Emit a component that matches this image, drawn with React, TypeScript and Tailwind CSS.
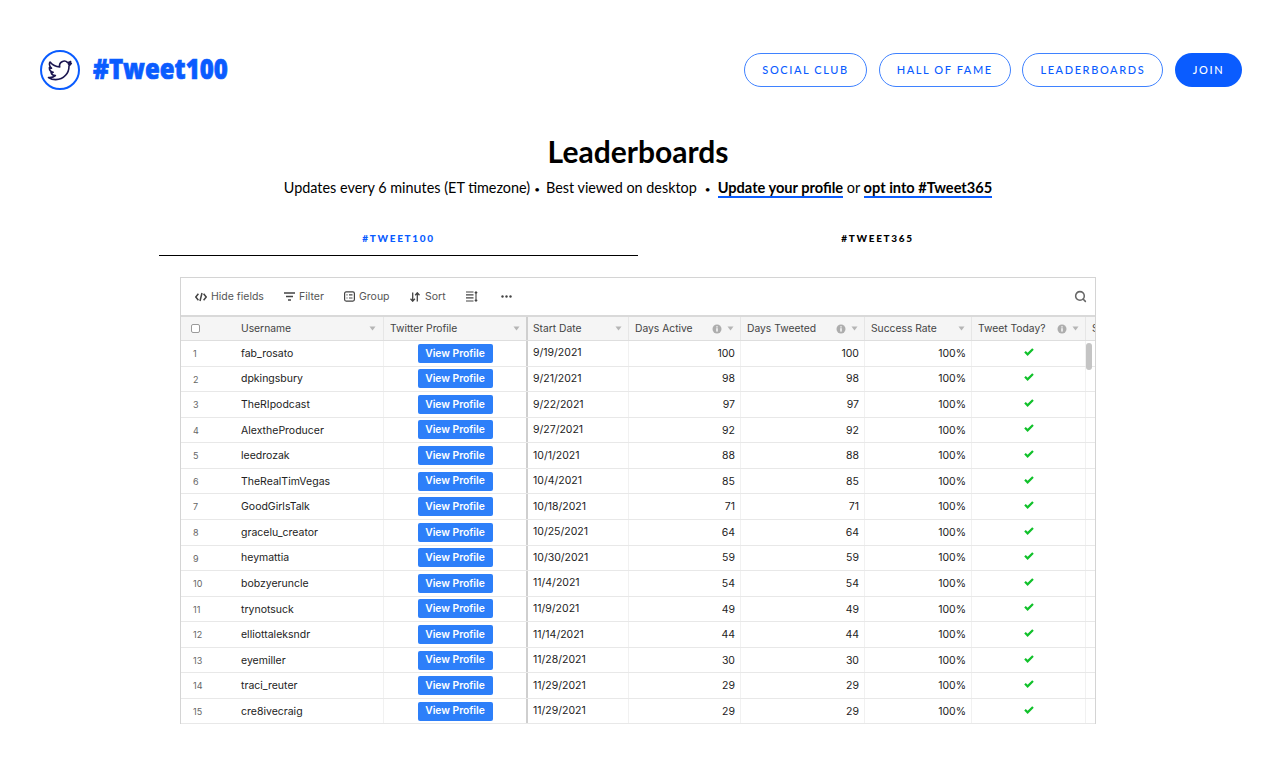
import { Search } from "lucide-react";

const BLUE = "#0a5cff";

const navLinks = [
  { title: "SOCIAL CLUB", width: "w-[123px]" },
  { title: "HALL OF FAME", width: "w-[132px]" },
  { title: "LEADERBOARDS", width: "w-[141px]" },
];

const rows = [
  { name: "fab_rosato", start: "9/19/2021", active: 100 },
  { name: "dpkingsbury", start: "9/21/2021", active: 98 },
  { name: "TheRIpodcast", start: "9/22/2021", active: 97 },
  { name: "AlextheProducer", start: "9/27/2021", active: 92 },
  { name: "leedrozak", start: "10/1/2021", active: 88 },
  { name: "TheRealTimVegas", start: "10/4/2021", active: 85 },
  { name: "GoodGirlsTalk", start: "10/18/2021", active: 71 },
  { name: "gracelu_creator", start: "10/25/2021", active: 64 },
  { name: "heymattia", start: "10/30/2021", active: 59 },
  { name: "bobzyeruncle", start: "11/4/2021", active: 54 },
  { name: "trynotsuck", start: "11/9/2021", active: 49 },
  { name: "elliottaleksndr", start: "11/14/2021", active: 44 },
  { name: "eyemiller", start: "11/28/2021", active: 30 },
  { name: "traci_reuter", start: "11/29/2021", active: 29 },
  { name: "cre8ivecraig", start: "11/29/2021", active: 29 },
];

function Caret() {
  return (
    <svg width="7" height="5" viewBox="0 0 7 5" className="shrink-0">
      <path d="M0.5 0.5h6L3.5 4.5z" fill="#b5b5b5" />
    </svg>
  );
}

function Info() {
  return (
    <svg width="10" height="10" viewBox="0 0 10 10" className="shrink-0">
      <circle cx="5" cy="5" r="4.5" fill="#adadad" />
      <rect x="4.3" y="4.2" width="1.4" height="3.4" fill="#fff" />
      <rect x="4.3" y="2.3" width="1.4" height="1.2" fill="#fff" />
    </svg>
  );
}

function Check() {
  return (
    <svg width="10" height="8" viewBox="0 0 10 8" className="mb-[3px]">
      <path d="M1 3.8l2.6 2.6L9 1" fill="none" stroke="#11c12b" strokeWidth="2.2" />
    </svg>
  );
}

function HeaderCell({ title, width, info, pad = "pl-[6px]", border = "border-r border-[#e6e6e6]" }: { title: string; width: string; info?: boolean; pad?: string; border?: string }) {
  return (
    <div className={`${width} ${border} ${pad} h-full shrink-0 flex items-center pr-[6px]`}>
      <span className="flex-1 truncate">{title}</span>
      {info && <span className="mr-[5px]"><Info /></span>}
      <Caret />
    </div>
  );
}

function Toolbar() {
  return (
    <div className="h-[37px] flex items-center pl-[14px] pr-[8px] text-[10.5px] text-[#555]">
      <div className="flex items-center gap-[4px] w-[89px]">
        <svg width="12" height="10" viewBox="0 0 12 10" fill="none" stroke="#444" strokeWidth="1.5">
          <path d="M3.4 1.8L0.8 5l2.6 3.2M8.6 1.8L11.2 5 8.6 8.2M7 1L5 9" />
        </svg>
        <span>Hide fields</span>
      </div>
      <div className="flex items-center gap-[4px] w-[60px]">
        <svg width="11" height="9" viewBox="0 0 11 9" fill="none" stroke="#444" strokeWidth="1.3">
          <path d="M0 1h11M2 4.5h7M4 8h3" />
        </svg>
        <span>Filter</span>
      </div>
      <div className="flex items-center gap-[4px] w-[66px]">
        <svg width="11" height="11" viewBox="0 0 11 11" fill="none" stroke="#444" strokeWidth="1.2">
          <rect x="0.6" y="0.9" width="9.8" height="9.2" rx="1.5" />
          <path d="M2.5 3.8h1M5 3.8h3.5M2.5 7h1M5 7h3.5" />
        </svg>
        <span>Group</span>
      </div>
      <div className="flex items-center gap-[5px] w-[56px]">
        <svg width="10" height="10" viewBox="0 0 10 10" fill="none" stroke="#444" strokeWidth="1.3">
          <path d="M2.7 0.5v8.5M0.5 6.8l2.2 2.4 2.2-2.4M7.3 9.5V1M5.2 3.2L7.3 0.8l2.2 2.4" />
        </svg>
        <span>Sort</span>
      </div>
      <div className="w-[35px]">
        <svg width="12" height="11" viewBox="0 0 12 11" fill="none" stroke="#444" strokeWidth="1.1">
          <path d="M0 1h7.5M0 3.9h7.5M0 6.9h7.5M0 10h7.5M10 1v9M8.8 2.2L10 .8l1.2 1.4M8.8 8.8l1.2 1.4 1.2-1.4" />
        </svg>
      </div>
      <svg width="11" height="3" viewBox="0 0 11 3" fill="#444">
        <circle cx="1.5" cy="1.5" r="1.2" />
        <circle cx="5.5" cy="1.5" r="1.2" />
        <circle cx="9.5" cy="1.5" r="1.2" />
      </svg>
      <Search className="ml-auto w-[13px] h-[13px] text-[#666]" strokeWidth={2.8} />
    </div>
  );
}

function Table() {
  return (
    <div className="relative w-[916px] h-[447px] ml-[180px] border-x border-t border-[#d4d4d4] overflow-hidden font-['Inter',sans-serif] text-[#333]">
      <Toolbar />
      <div className="h-[26px] flex items-center bg-[#f5f5f5] border-t-2 border-b border-t-[#d9d9d9] border-b-[#dedede] text-[10.3px] text-[#444]">
        <div className="w-[203px] h-full shrink-0 flex items-center border-r border-[#e6e6e6]">
          <span className="w-[60px] pl-[10px] shrink-0">
            <span className="block w-[9px] h-[9px] rounded-[2px] border border-[#9a9a9a] bg-white" />
          </span>
          <span className="flex-1">Username</span>
          <span className="mr-[7px]"><Caret /></span>
        </div>
        <HeaderCell title="Twitter Profile" width="w-[144px]" border="border-r-2 border-[#cfcfcf]" />
        <HeaderCell title="Start Date" width="w-[101px]" pad="pl-[5px]" />
        <HeaderCell title="Days Active" width="w-[112px]" info />
        <HeaderCell title="Days Tweeted" width="w-[124px]" info />
        <HeaderCell title="Success Rate" width="w-[107px]" />
        <HeaderCell title="Tweet Today?" width="w-[114px]" info />
        <div className="pl-[6px]">S</div>
      </div>
      {rows.map((row, i) => (
        <div key={row.name} className="h-[25.57px] flex items-center border-b border-[#e8e8e8] text-[10.5px] text-[#222]">
          <div className="w-[203px] h-full shrink-0 flex items-center border-r border-[#f1f1f1] pt-[1px]">
            <span className="w-[60px] pl-[12px] shrink-0 text-[9px] text-[#666]">{i + 1}</span>
            <span>{row.name}</span>
          </div>
          <div className="w-[144px] h-full shrink-0 flex items-center justify-center border-r-2 border-[#cfcfcf]">
            <span className="w-[75px] h-[19px] rounded-[2px] bg-[#2d7ff9] text-white font-semibold text-[10.3px] flex items-center justify-center">View Profile</span>
          </div>
          <div className="w-[101px] h-full shrink-0 flex items-center pl-[5px] border-r border-[#f1f1f1]">{row.start}</div>
          <div className="w-[112px] h-full shrink-0 flex items-center justify-end pr-[5px] pt-[1px] border-r border-[#f1f1f1]">{row.active}</div>
          <div className="w-[124px] h-full shrink-0 flex items-center justify-end pr-[5px] pt-[1px] border-r border-[#f1f1f1]">{row.active}</div>
          <div className="w-[107px] h-full shrink-0 flex items-center justify-end pr-[5px] pt-[1px] border-r border-[#f1f1f1]">100%</div>
          <div className="w-[114px] h-full shrink-0 flex items-center justify-center border-r border-[#f1f1f1]"><Check /></div>
        </div>
      ))}
      {/* scrollbar thumb */}
      <div className="absolute left-[905px] top-[65px] w-[6px] h-[27px] rounded-[3px] bg-[#c4c4c4]" />
    </div>
  );
}

export default function App() {
  return (
    <div className="w-[1270px] h-[760px] bg-white overflow-hidden font-['Lato',sans-serif] text-black">
      {/* Top nav */}
      <header className="h-[137px] flex items-start pl-[40px] pr-[28px] pt-[50px]">
        <div className="flex items-center gap-[13px]">
          <svg width="40" height="40" viewBox="0 0 40 40">
            <circle cx="20" cy="20" r="19" fill="none" stroke={BLUE} strokeWidth="2" />
            <g transform="translate(8.5 9) scale(0.95)">
              <path
                d="M23.953 4.57a10 10 0 01-2.825.775 4.958 4.958 0 002.163-2.723c-.951.555-2.005.959-3.127 1.184a4.92 4.92 0 00-8.384 4.482C7.69 8.095 4.067 6.13 1.64 3.162a4.822 4.822 0 00-.666 2.475c0 1.71.87 3.213 2.188 4.096a4.904 4.904 0 01-2.228-.616v.06a4.923 4.923 0 003.946 4.827 4.996 4.996 0 01-2.212.085 4.936 4.936 0 004.604 3.417 9.867 9.867 0 01-6.102 2.105c-.39 0-.779-.023-1.17-.067a13.995 13.995 0 007.557 2.209c9.053 0 13.998-7.496 13.998-13.985 0-.21 0-.42-.015-.63A9.935 9.935 0 0024 4.59z"
                fill="none"
                stroke="#1b1650"
                strokeWidth="1.7"
                strokeLinejoin="round"
              />
            </g>
          </svg>
          <span className="font-['Open_Sans',sans-serif] font-extrabold text-[24px] leading-none text-[#0a5cff] [-webkit-text-stroke:0.6px_#0a5cff] scale-y-[1.18] mb-[4px]">#Tweet100</span>
        </div>
        <nav className="ml-auto mt-[3px] flex items-center gap-[11.67px]">
          {navLinks.map((link) => (
            <a key={link.title} className={`${link.width} h-[34px] rounded-full border-[1.5px] border-[#3f82ff] text-[#0a5cff] text-[11px] font-medium tracking-[0.145em] flex items-center justify-center`}>
              {link.title}
            </a>
          ))}
          <a className="w-[67px] h-[34px] rounded-full bg-[#0a5cff] text-white text-[11px] font-medium tracking-[0.145em] flex items-center justify-center">JOIN</a>
        </nav>
      </header>

      {/* Title */}
      <h1 className="pl-[6px] text-center text-[30px] leading-[26px] font-bold mt-[1px]">Leaderboards</h1>
      <p className="pl-[6px] mt-[14px] text-center text-[14.4px] leading-[20px]">
        Updates every 6 minutes (ET timezone)
        <span className="text-[10px] ml-[4px] mr-[6px]">•</span>
        Best viewed on desktop
        <span className="text-[10px] ml-[8px] mr-[7px]">•</span>
        <b className="text-[14.6px] border-b-2 border-[#0a5cff]">Update your profile</b> or <b className="text-[14.6px] border-b-2 border-[#0a5cff]">opt into #Tweet365</b>
      </p>

      {/* Tabs */}
      <div className="mt-[27px] ml-[159px] w-[958px] flex text-[10px] font-black tracking-[0.17em]">
        <div className="w-[479px] h-[30px] pt-[5px] text-center text-[#0a5cff] border-b border-black">#TWEET100</div>
        <div className="w-[479px] pt-[5px] text-center">#TWEET365</div>
      </div>

      <div className="mt-[21px]">
        <Table />
      </div>
    </div>
  );
}
